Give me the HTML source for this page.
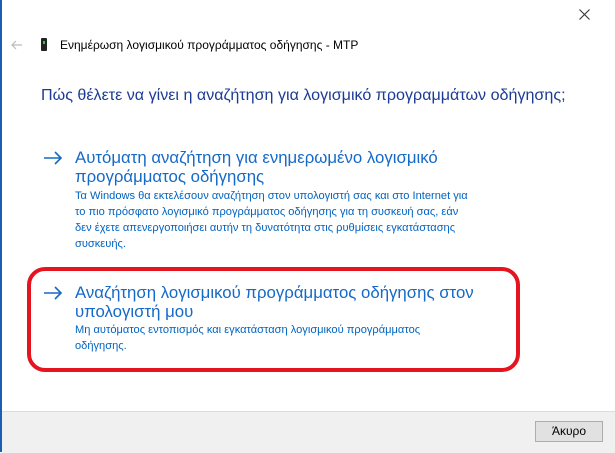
<!DOCTYPE html>
<html><head><meta charset="utf-8"><style>
body{margin:0;width:615px;height:452px;background:#fff;font-family:"Liberation Sans","DejaVu Sans",sans-serif;position:relative;overflow:hidden}
.a{position:absolute;white-space:nowrap}
.t{color:#1569c7;font-size:16.8px;line-height:19px}
.d{color:#0063c0;font-size:11.1px;line-height:16px}
</style></head><body>
<div class="a" style="left:0;top:0;width:2px;height:452px;background:#1a5fb4"></div>
<svg class="a" style="left:579px;top:9px" width="11" height="11"><path d="M0.5 0.5L10.5 10.5M10.5 0.5L0.5 10.5" stroke="#333" stroke-width="1.1"/></svg>
<svg class="a" style="left:11px;top:40px" width="12" height="10"><path d="M11 5H1M5 1L1 5L5 9" stroke="#bbb" stroke-width="1.2" fill="none"/></svg>
<div class="a" style="left:41px;top:38px;width:6px;height:13px;background:#222;border-radius:1px"></div>
<div class="a" style="left:43px;top:41px;width:2px;height:3px;background:#3c3"></div>
<div class="a" style="left:60px;top:38px;font-size:12px;color:#000">Ενημέρωση λογισμικού προγράμματος οδήγησης - MTP</div>
<div class="a" style="left:41px;top:86px;font-size:16.1px;color:#1c3b94">Πώς θέλετε να γίνει η αναζήτηση για λογισμικό προγραμμάτων οδήγησης;</div>
<svg class="a" style="left:43px;top:151px" width="20" height="14"><path d="M1 7H18M12 1L18 7L12 13" stroke="#1569c7" stroke-width="1.6" fill="none"/></svg>
<div class="a t" style="left:75px;top:148px">Αυτόματη αναζήτηση για ενημερωμένο λογισμικό<br>προγράμματος οδήγησης</div>
<div class="a d" style="left:75px;top:188px">Τα Windows θα εκτελέσουν αναζήτηση στον υπολογιστή σας και στο Internet για<br>το πιο πρόσφατο λογισμικό προγράμματος οδήγησης για τη συσκευή σας, εάν<br>δεν έχετε απενεργοποιήσει αυτήν τη δυνατότητα στις ρυθμίσεις εγκατάστασης<br>συσκευής.</div>
<div class="a" style="left:27px;top:267px;width:485px;height:97px;border:4px solid #e5141f;border-radius:18px"></div>
<svg class="a" style="left:43px;top:286px" width="20" height="14"><path d="M1 7H18M12 1L18 7L12 13" stroke="#1569c7" stroke-width="1.6" fill="none"/></svg>
<div class="a t" style="left:75px;top:283px">Αναζήτηση λογισμικού προγράμματος οδήγησης στον<br>υπολογιστή μου</div>
<div class="a d" style="left:75px;top:322px">Μη αυτόματος εντοπισμός και εγκατάσταση λογισμικού προγράμματος<br>οδήγησης.</div>
<div class="a" style="left:2px;top:411px;width:613px;height:41px;background:#f0f0f0;border-top:1px solid #dcdcdc"></div>
<div class="a" style="left:535px;top:421px;width:66px;height:19px;background:#e1e1e1;border:1px solid #adadad;font-size:12px;text-align:center;line-height:19px;color:#000">Άκυρο</div>
</body></html>
